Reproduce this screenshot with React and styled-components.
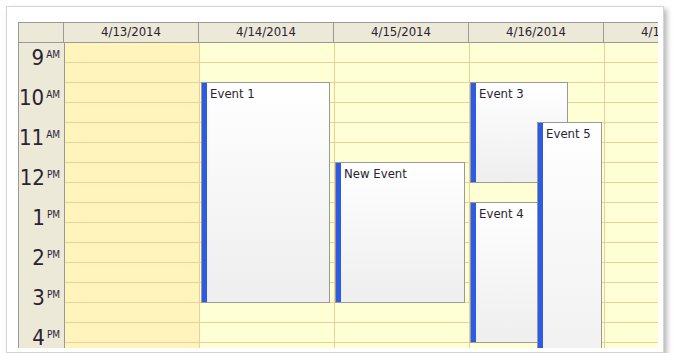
import React from "react";
import styled, { createGlobalStyle } from "styled-components";

const GlobalStyle = createGlobalStyle`
  html, body {
    margin: 0;
    padding: 0;
    background: #ffffff;
  }
  body {
    font-family: "DejaVu Sans Condensed", "DejaVu Sans", sans-serif;
    font-stretch: semi-condensed;
  }
`;

const days = ["4/13/2014", "4/14/2014", "4/15/2014", "4/16/2014", "4/17/2014"];
const hours = [
  { h: "9", ap: "AM" },
  { h: "10", ap: "AM" },
  { h: "11", ap: "AM" },
  { h: "12", ap: "PM" },
  { h: "1", ap: "PM" },
  { h: "2", ap: "PM" },
  { h: "3", ap: "PM" },
  { h: "4", ap: "PM" },
  { h: "5", ap: "PM" },
];

// start/end in hours of the day, left/width in px inside the day column
const events = [
  { id: 1, day: 1, text: "Event 1", start: 10, end: 15.5, left: 1, width: 129 },
  { id: 2, day: 2, text: "New Event", start: 12, end: 15.5, left: 0, width: 130 },
  { id: 3, day: 3, text: "Event 3", start: 10, end: 12.5, left: 0, width: 98 },
  { id: 4, day: 3, text: "Event 4", start: 13, end: 16.5, left: 0, width: 68 },
  { id: 5, day: 3, text: "Event 5", start: 11, end: 18, left: 67, width: 65 },
];

const ROW = 20;
const FIRST_HOUR = 9;

export default function App() {
  return (
    <>
      <GlobalStyle />
      <Panel>
        <Calendar>
          <Header>
            <Corner />
            {days.map((d) => (
              <DayHeader key={d}>{d}</DayHeader>
            ))}
          </Header>
          <Body>
            <HourColumn>
              {hours.map((hr) => (
                <HourCell key={hr.h + hr.ap}>
                  <HourNum>{hr.h}</HourNum>
                  <HourSuffix>{hr.ap}</HourSuffix>
                </HourCell>
              ))}
            </HourColumn>
            {days.map((d, i) => (
              <DayColumn key={d} weekend={i === 0}>
                {hours.flatMap((hr) => [
                  <Cell key={hr.h + "a"} />,
                  <Cell key={hr.h + "b"} />,
                ])}
                {events
                  .filter((e) => e.day === i)
                  .map((e) => (
                    <Event
                      key={e.id}
                      style={{
                        top: (e.start - FIRST_HOUR) * ROW * 2 - 1,
                        height: (e.end - e.start) * ROW * 2 + 1,
                        left: e.left,
                        width: e.width,
                      }}
                    >
                      <EventBar />
                      <EventText>{e.text}</EventText>
                    </Event>
                  ))}
              </DayColumn>
            ))}
          </Body>
        </Calendar>
      </Panel>
    </>
  );
}

const Panel = styled.div`
  box-sizing: border-box;
  margin: 6px 0 0 6px;
  width: 658px;
  height: 347px;
  padding: 15px 5px 4px 11px;
  border: 1px solid #d4d4d4;
  background: #ffffff;
  box-shadow: 3px 3px 5px rgba(0, 0, 0, 0.28);
`;

const Calendar = styled.div`
  box-sizing: border-box;
  width: 640px;
  height: 326px;
  overflow: hidden;
  border-top: 1px solid #999999;
  border-left: 1px solid #999999;
`;

const Header = styled.div`
  display: flex;
  height: 19px;
  border-bottom: 1px solid #999999;
  background: #ece9d8;
  white-space: nowrap;
`;

const Corner = styled.div`
  flex: 0 0 44px;
  border-right: 1px solid #999999;
`;

const DayHeader = styled.div`
  flex: 0 0 134px;
  border-right: 1px solid #999999;
  font-size: 13px;
  line-height: 17px;
  color: #2a2233;
  text-align: center;
  overflow: hidden;
`;

const Body = styled.div`
  display: flex;
`;

const HourColumn = styled.div`
  flex: 0 0 44px;
  border-right: 1px solid #999999;
  background: #ece9d8;
`;

const HourCell = styled.div`
  display: flex;
  justify-content: flex-end;
  height: 40px;
  padding: 4px 4px 0 0;
  box-sizing: border-box;
  color: #2a2233;
`;

const HourNum = styled.span`
  font-size: 22px;
  line-height: 22px;
`;

const HourSuffix = styled.span`
  font-size: 10px;
  line-height: 10px;
  margin: 3px 0 0 2px;
`;

const DayColumn = styled.div`
  position: relative;
  flex: 0 0 134px;
  border-right: 1px solid #ead098;
  background: ${(p) => (p.weekend ? "#fff4bc" : "#ffffd5")};
`;

const Cell = styled.div`
  height: ${ROW - 1}px;
  border-bottom: 1px solid #ead098;
`;

const Event = styled.div`
  position: absolute;
  box-sizing: border-box;
  display: flex;
  border: 1px solid #999999;
  background: linear-gradient(to bottom, #ffffff, #eeeeee);
  overflow: hidden;
`;

const EventBar = styled.div`
  flex: 0 0 5px;
  background: #2d5be3;
`;

const EventText = styled.div`
  padding: 3px 0 0 3px;
  font-size: 13px;
  line-height: 16px;
  color: #2a2233;
  white-space: nowrap;
`;
